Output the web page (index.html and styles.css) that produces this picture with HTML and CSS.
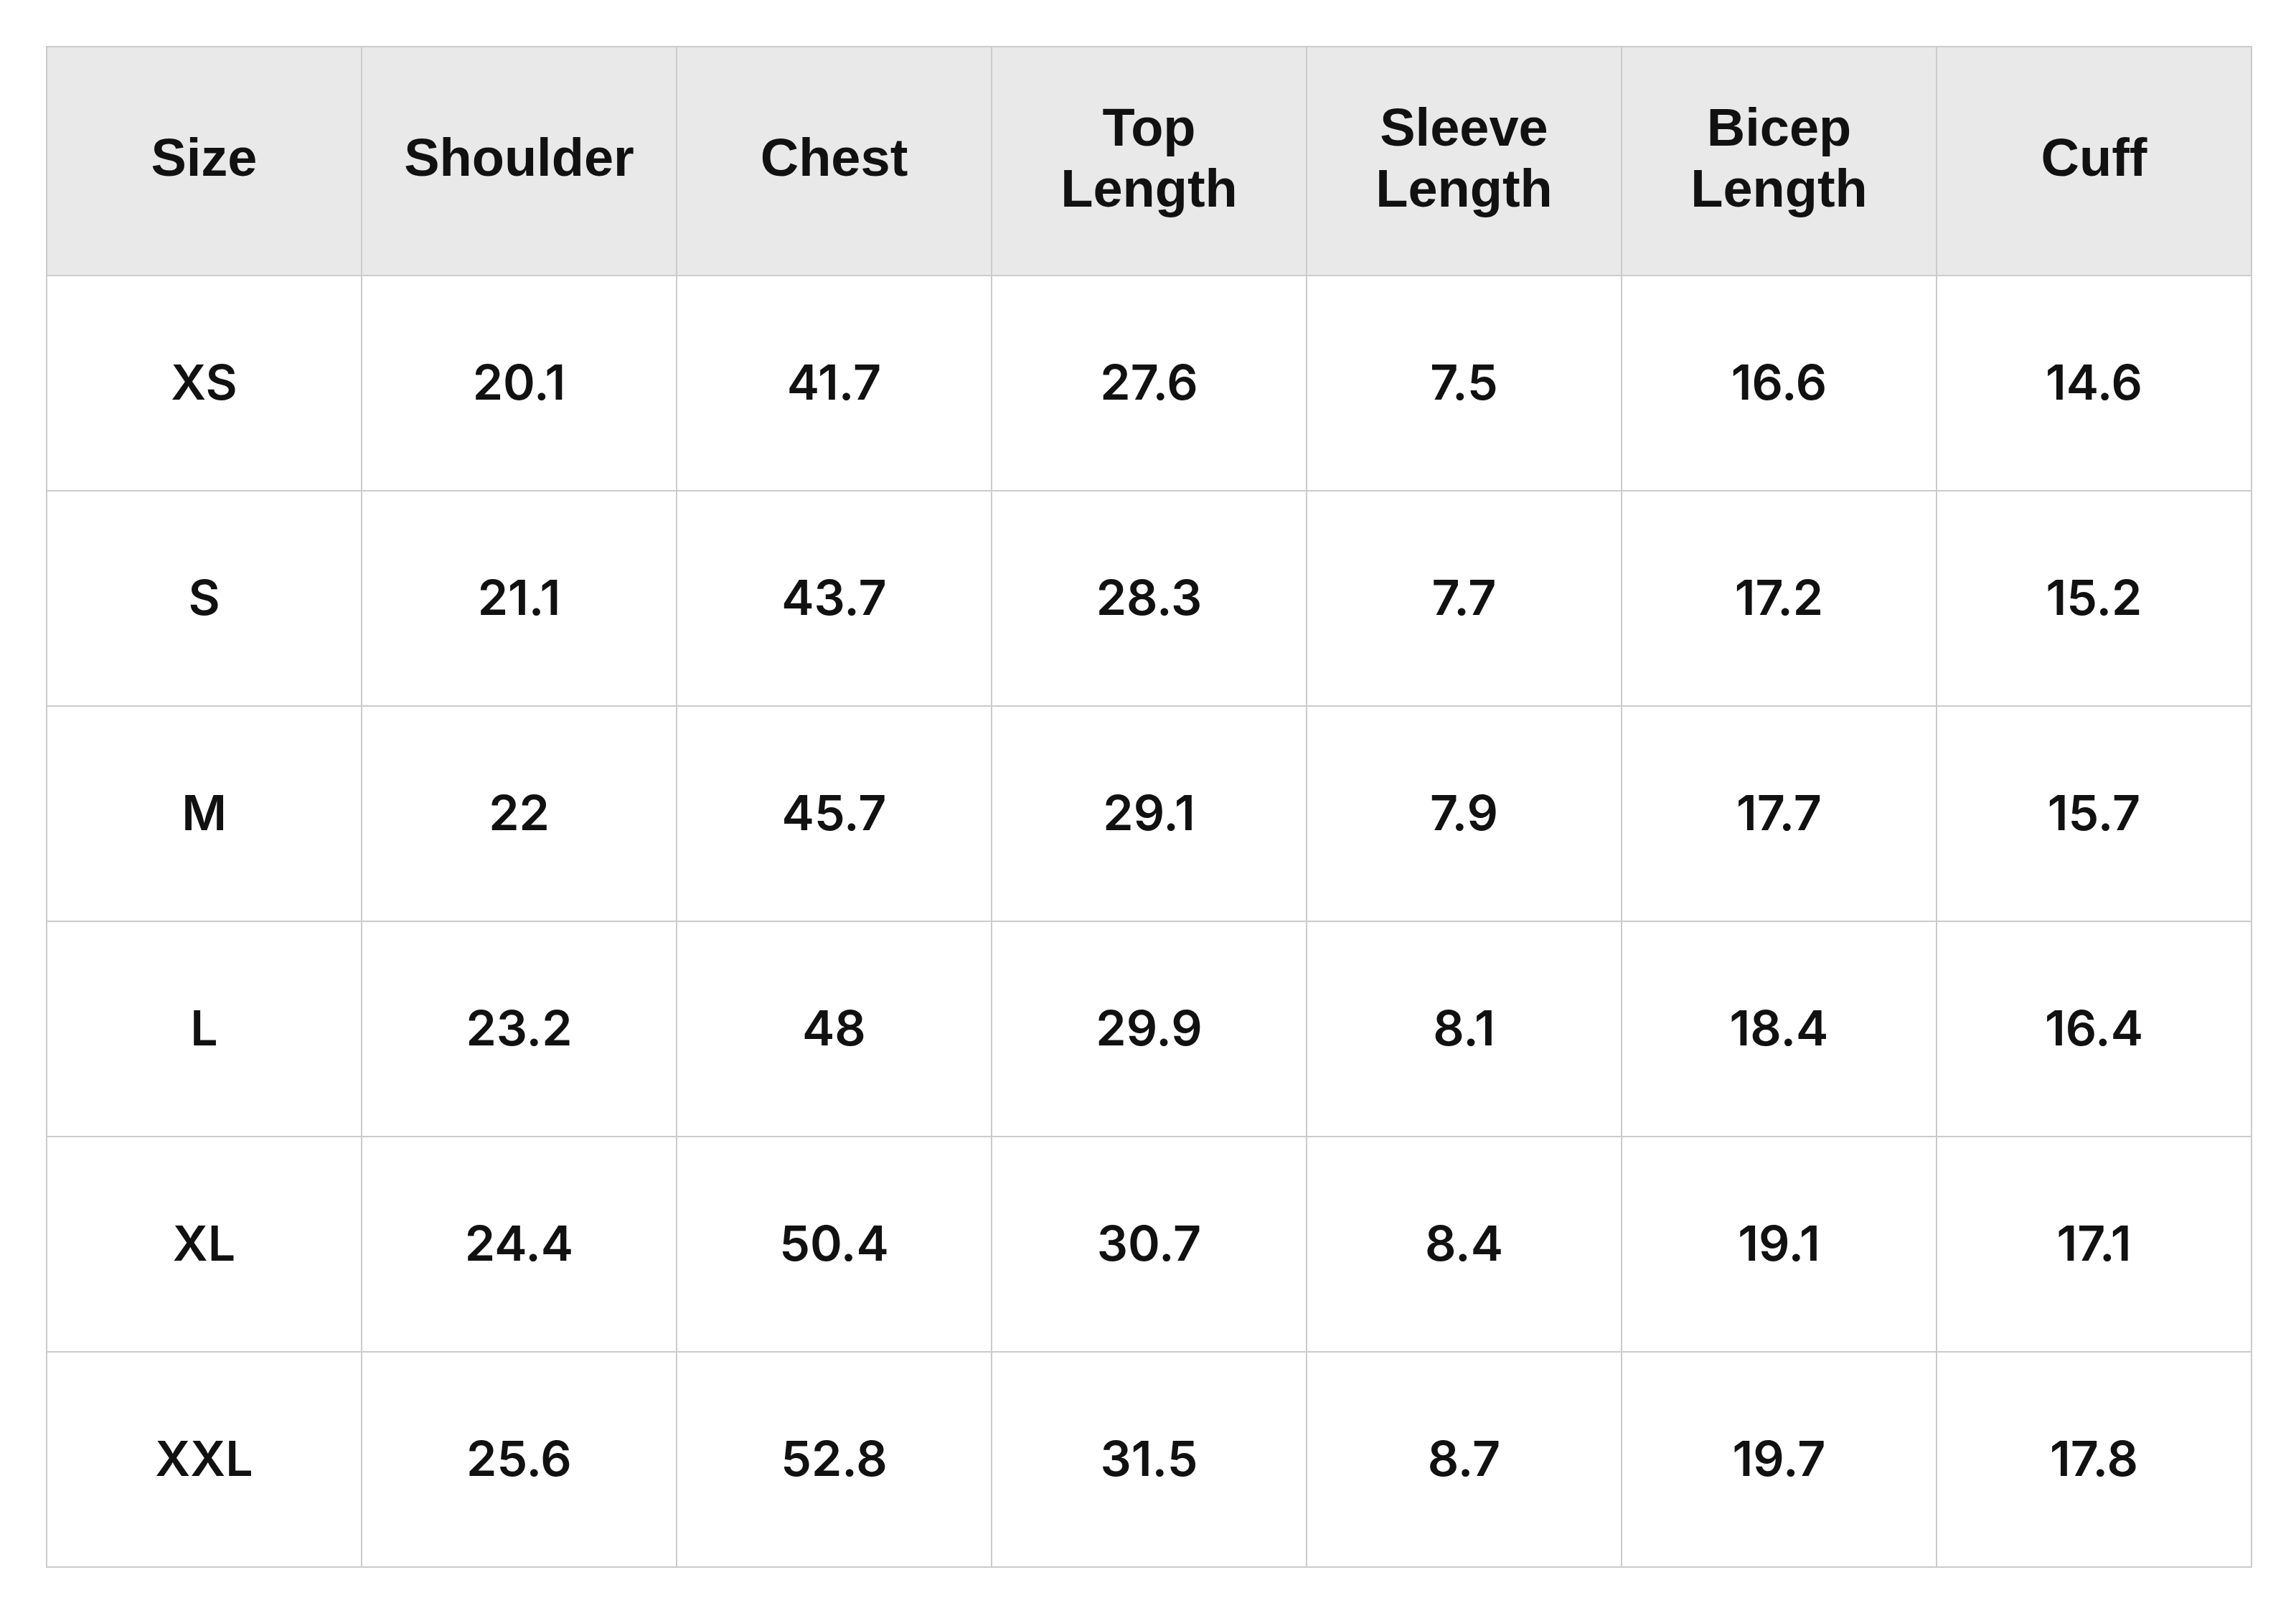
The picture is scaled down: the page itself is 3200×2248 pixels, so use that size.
FILE: index.html
```html
<!DOCTYPE html>
<html lang="en">
<head>
<meta charset="utf-8">
<title>Size Chart</title>
<link rel="stylesheet" href="styles.css">
</head>
<body>
<table class="size-table">
  <thead>
    <tr>
      <th>Size</th>
      <th>Shoulder</th>
      <th>Chest</th>
      <th>Top<br>Length</th>
      <th>Sleeve<br>Length</th>
      <th>Bicep<br>Length</th>
      <th>Cuff</th>
    </tr>
  </thead>
  <tbody>
    <tr><td>XS</td><td>20.1</td><td>41.7</td><td>27.6</td><td>7.5</td><td>16.6</td><td>14.6</td></tr>
    <tr><td>S</td><td>21.1</td><td>43.7</td><td>28.3</td><td>7.7</td><td>17.2</td><td>15.2</td></tr>
    <tr><td>M</td><td>22</td><td>45.7</td><td>29.1</td><td>7.9</td><td>17.7</td><td>15.7</td></tr>
    <tr><td>L</td><td>23.2</td><td>48</td><td>29.9</td><td>8.1</td><td>18.4</td><td>16.4</td></tr>
    <tr><td>XL</td><td>24.4</td><td>50.4</td><td>30.7</td><td>8.4</td><td>19.1</td><td>17.1</td></tr>
    <tr><td>XXL</td><td>25.6</td><td>52.8</td><td>31.5</td><td>8.7</td><td>19.7</td><td>17.8</td></tr>
  </tbody>
</table>
</body>
</html>
```

FILE: styles.css
```css
html, body {
  margin: 0;
  padding: 0;
  background: #ffffff;
}

body {
  padding: 64px 0 0 64px;
}

.size-table {
  border-collapse: collapse;
  table-layout: fixed;
  width: 3075px;
  color: #111111;
}

.size-table th,
.size-table td {
  border: 2px solid #cbcbcb;
  text-align: center;
  vertical-align: middle;
  padding: 0;
}

.size-table th {
  background: #e9e9e9;
  height: 307px;
  padding-bottom: 10px;
  font-family: "Liberation Sans", Arial, sans-serif;
  font-weight: 700;
  font-size: 74px;
  line-height: 85px;
}

.size-table td {
  height: 295px;
  padding-bottom: 3px;
  font-family: Inter, "Noto Sans", sans-serif;
  font-weight: 600;
  font-size: 68px;
  line-height: 1.2;
}
```
